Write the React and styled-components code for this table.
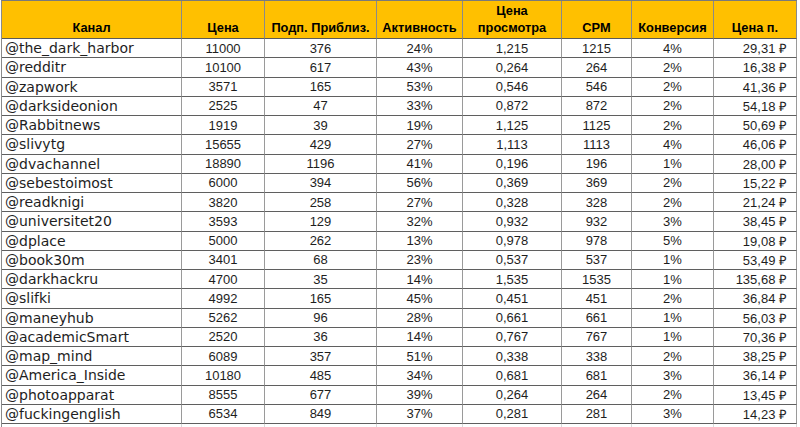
import React from "react";
import styled, { createGlobalStyle } from "styled-components";

const Global = createGlobalStyle`
  html, body { margin: 0; padding: 0; background: #ffffff; }
  body { overflow: hidden; }
`;

const COLS = "180px 83px 112px 86px 99px 70px 82px 83px";

const Sheet = styled.div`
  display: grid;
  grid-template-columns: ${COLS};
  grid-template-rows: 38px;
  grid-auto-rows: 19.25px;
  width: max-content;
  margin-left: 1px;
  border-left: 1px solid #8a8a8a;
  border-top: 1px solid #7a7a7a;
`;

const HeadCell = styled.div`
  box-sizing: border-box;
  background: #ffc000;
  border-right: 1px solid #8a8a8a;
  border-bottom: 1px solid #5a5a5a;
  display: flex;
  align-items: flex-end;
  justify-content: center;
  text-align: center;
  padding: 0 1px 2px;
  font-family: "Liberation Sans", Arial, sans-serif;
  font-weight: bold;
  font-size: 12.8px;
  line-height: 17px;
  color: #000;
  white-space: nowrap;
`;

const Cell = styled.div`
  box-sizing: border-box;
  border-right: 1px solid ${(p) => (p.$ghost ? "#d9d9d9" : "#9a9a9a")};
  border-bottom: 1px solid ${(p) => (p.$ghost ? "#d9d9d9" : "#5f5f5f")};
  display: flex;
  align-items: center;
  justify-content: ${(p) =>
    p.$align === "left" ? "flex-start" : p.$align === "right" ? "flex-end" : "center"};
  padding: 0 ${(p) => (p.$align === "right" ? "9px" : "3px")} 0 3px;
  white-space: nowrap;
  overflow: hidden;
  font-family: ${(p) =>
    p.$mono ? '"DejaVu Sans", Verdana, sans-serif' : '"Liberation Sans", Arial, sans-serif'};
  font-size: ${(p) => (p.$mono ? "14px" : "13px")};
  color: #1e1e1e;
`;

const headers = [
  "Канал",
  "Цена",
  "Подп. Приблиз.",
  "Активность",
  <>Цена<br />просмотра</>,
  "CPM",
  "Конверсия",
  "Цена п.",
];

const rows = [
  ["@the_dark_harbor", 11000, 376, "24%", "1,215", 1215, "4%", "29,31"],
  ["@redditr", 10100, 617, "43%", "0,264", 264, "2%", "16,38"],
  ["@zapwork", 3571, 165, "53%", "0,546", 546, "2%", "41,36"],
  ["@darksideonion", 2525, 47, "33%", "0,872", 872, "2%", "54,18"],
  ["@Rabbitnews", 1919, 39, "19%", "1,125", 1125, "2%", "50,69"],
  ["@slivytg", 15655, 429, "27%", "1,113", 1113, "4%", "46,06"],
  ["@dvachannel", 18890, 1196, "41%", "0,196", 196, "1%", "28,00"],
  ["@sebestoimost", 6000, 394, "56%", "0,369", 369, "2%", "15,22"],
  ["@readknigi", 3820, 258, "27%", "0,328", 328, "2%", "21,24"],
  ["@universitet20", 3593, 129, "32%", "0,932", 932, "3%", "38,45"],
  ["@dplace", 5000, 262, "13%", "0,978", 978, "5%", "19,08"],
  ["@book30m", 3401, 68, "23%", "0,537", 537, "1%", "53,49"],
  ["@darkhackru", 4700, 35, "14%", "1,535", 1535, "1%", "135,68"],
  ["@slifki", 4992, 165, "45%", "0,451", 451, "2%", "36,84"],
  ["@maneyhub", 5262, 96, "28%", "0,661", 661, "1%", "56,03"],
  ["@academicSmart", 2520, 36, "14%", "0,767", 767, "1%", "70,36"],
  ["@map_mind", 6089, 357, "51%", "0,338", 338, "2%", "38,25"],
  ["@America_Inside", 10180, 485, "34%", "0,681", 681, "3%", "36,14"],
  ["@photoapparat", 8555, 677, "39%", "0,264", 264, "2%", "13,45"],
  ["@fuckingenglish", 6534, 849, "37%", "0,281", 281, "3%", "14,23"],
];

export default function App() {
  return (
    <>
      <Global />
      <Sheet>
        {headers.map((h, i) => (
          <HeadCell key={"h" + i}>
            <span>{h}</span>
          </HeadCell>
        ))}
        {rows.map((r, ri) =>
          r.map((v, ci) => (
            <Cell
              key={ri + "-" + ci}
              $mono={ci === 0}
              $align={ci === 0 ? "left" : ci === 7 ? "right" : "center"}
            >
              {ci === 7 ? `${v} ₽` : v}
            </Cell>
          ))
        )}
        {headers.map((_, i) => (
          <Cell key={"g" + i} $ghost />
        ))}
      </Sheet>
    </>
  );
}
